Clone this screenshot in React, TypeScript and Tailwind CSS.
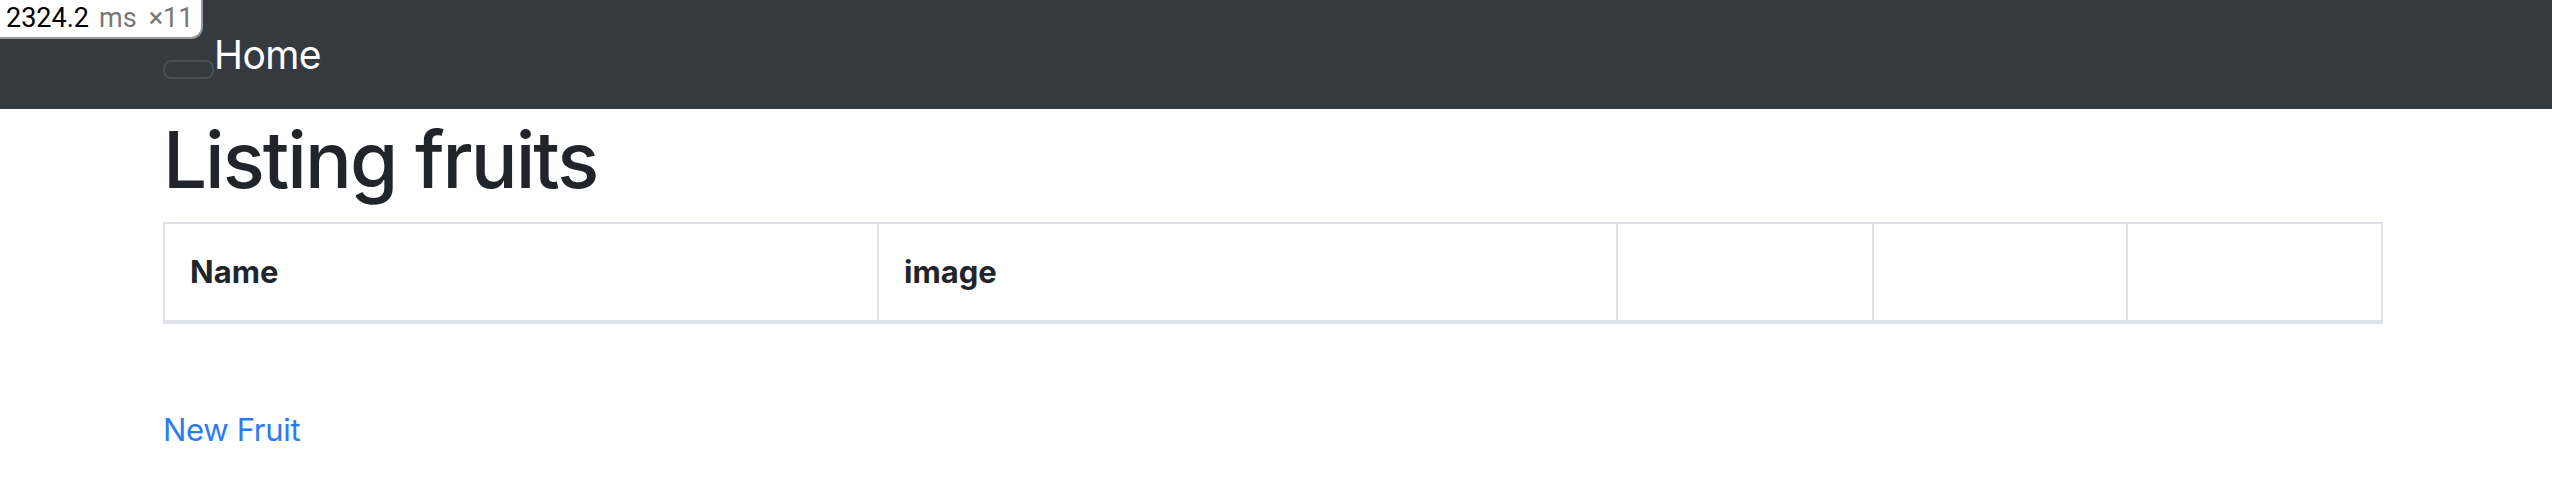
const columns = [
  { label: "Name", width: "w-[714px]" },
  { label: "image", width: "w-[739px]" },
  { label: "", width: "w-[256px]" },
  { label: "", width: "w-[254px]" },
  { label: "", width: "w-[255px]" },
];

export default function App() {
  return (
    <div className="relative min-h-[494px] bg-white font-['Inter',sans-serif] text-[#212529]">
      {/* timing badge over the navbar */}
      <div className="absolute left-0 top-0 flex h-[39px] w-[203px] items-center gap-[10px] rounded-br-[12px] border-b-2 border-r-2 border-[#9a9a9a] bg-white pl-[6px] font-['Roboto',sans-serif] text-[27px] leading-none">
        <span className="text-black">2324.2</span>
        <span className="flex gap-[12px] text-[#777]">
          <span>ms</span>
          <span>×11</span>
        </span>
      </div>

      <nav className="flex h-[109px] items-start bg-[#343a40] pl-[163px] pt-[26px]">
        <span className="mt-[34px] h-[19px] w-[51px] rounded-[8px] border-2 border-[#4a4f55]" />
        <a className="text-[39px] leading-[58px] tracking-[-0.6px] text-white">Home</a>
      </nav>

      <main className="ml-[163px] w-[2218px]">
        <h1 className="mb-[15px] mt-[4px] text-[78px] font-medium leading-[94px] tracking-[-2px]">
          Listing fruits
        </h1>

        <table className="w-[2218px] table-fixed border-collapse">
          <thead>
            <tr className="border-2 border-b-4 border-[#dee2e6]">
              {columns.map((col, i) => (
                <th
                  key={i}
                  className={`${col.width} border-l-2 border-[#dee2e6] p-[25px] text-left text-[31px] font-bold leading-[46px]`}
                >
                  {col.label}
                </th>
              ))}
            </tr>
          </thead>
          <tbody />
        </table>

        <a className="mt-[83px] block text-[31px] leading-[46px] tracking-[-0.3px] text-[#2b7bf6]">New Fruit</a>
      </main>
    </div>
  );
}
